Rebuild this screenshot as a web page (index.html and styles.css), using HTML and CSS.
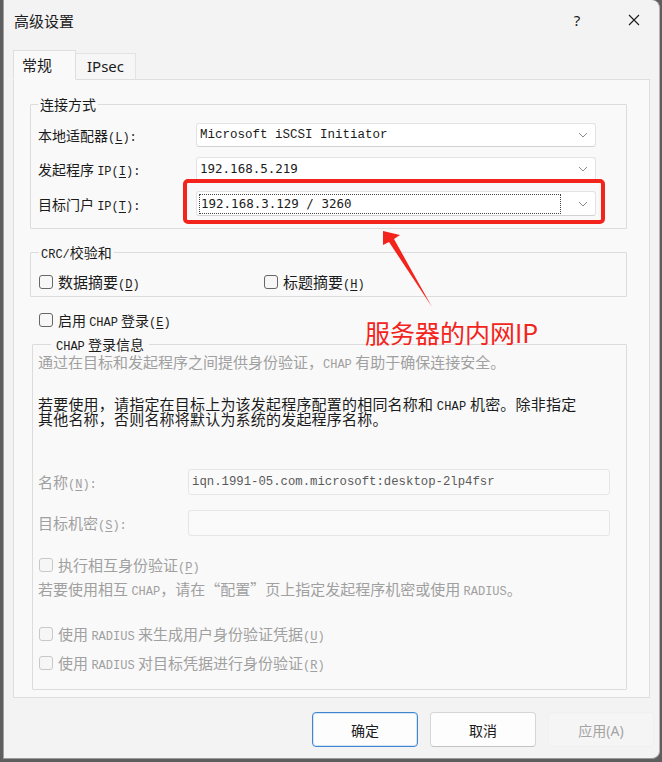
FILE: index.html
```html
<!DOCTYPE html>
<html lang="zh-CN">
<head>
    <meta charset="UTF-8">
    <meta name="viewport" content="width=device-width, initial-scale=1.0">
    <title>高级设置</title>
    <link rel="stylesheet" href="styles.css">
</head>
<body>
    <div class="window">
        <div class="titlebar">
            <span class="title">高级设置</span>
            <span class="help">?</span>
            <span class="close">
                <svg width="12" height="12" viewBox="0 0 12 12"><path d="M1 1L11 11M11 1L1 11" stroke="#1b1b1b" stroke-width="1.1" fill="none"/></svg>
            </span>
        </div>

        <div class="tabs">
            <div class="tab active">常规</div>
            <div class="tab">IPsec</div>
        </div>

        <div class="panel">
            <!-- 连接方式 -->
            <fieldset class="group conn">
                <legend>连接方式</legend>
                <div class="form">
                    <span class="label">本地适配器<span class="en">(<u>L</u>):</span></span>
                    <div class="combo">
                        <span class="value serif-mono">Microsoft iSCSI Initiator</span>
                        <svg class="chev" width="10" height="6" viewBox="0 0 10 6"><path d="M1 1L5 5L9 1" stroke="#8a8a8a" fill="none"/></svg>
                    </div>

                    <span class="label">发起程序 <span class="en">IP(<u>I</u>):</span></span>
                    <div class="combo">
                        <span class="value sans-mono">192.168.5.219</span>
                        <svg class="chev" width="10" height="6" viewBox="0 0 10 6"><path d="M1 1L5 5L9 1" stroke="#8a8a8a" fill="none"/></svg>
                    </div>

                    <span class="label">目标门户 <span class="en">IP(<u>T</u>):</span></span>
                    <div class="combo">
                        <span class="value sans-mono focus">192.168.3.129 / 3260</span>
                        <svg class="chev" width="10" height="6" viewBox="0 0 10 6"><path d="M1 1L5 5L9 1" stroke="#8a8a8a" fill="none"/></svg>
                    </div>
                </div>
            </fieldset>

            <!-- CRC -->
            <fieldset class="group crc">
                <legend><span class="en">CRC/</span>校验和</legend>
                <div class="checks">
                    <label class="check"><i class="box"></i><span>数据摘要<span class="en">(<u>D</u>)</span></span></label>
                    <label class="check"><i class="box"></i><span>标题摘要<span class="en">(<u>H</u>)</span></span></label>
                </div>
            </fieldset>

            <label class="check chap-on"><i class="box"></i><span>启用 <span class="en">CHAP</span> 登录<span class="en">(<u>E</u>)</span></span></label>

            <!-- CHAP 登录信息 -->
            <fieldset class="group chap">
                <legend><span class="en">CHAP</span> 登录信息</legend>
                <p class="muted desc">通过在目标和发起程序之间提供身份验证，<span class="en">CHAP</span> 有助于确保连接安全。</p>
                <p class="note">若要使用，请指定在目标上为该发起程序配置的相同名称和 <span class="en">CHAP</span> 机密。除非指定<br>其他名称，否则名称将默认为系统的发起程序名称。</p>

                <div class="form chap-form">
                    <span class="label muted">名称<span class="en">(<u>N</u>):</span></span>
                    <div class="field"><span class="serif-mono">iqn.1991-05.com.microsoft:desktop-2lp4fsr</span></div>

                    <span class="label muted">目标机密<span class="en">(<u>S</u>):</span></span>
                    <div class="field"></div>
                </div>

                <label class="check off mutual"><i class="box"></i><span>执行相互身份验证<span class="en">(<u>P</u>)</span></span></label>
                <p class="muted hint">若要使用相互 <span class="en">CHAP</span>，请在“配置”页上指定发起程序机密或使用 <span class="en">RADIUS</span>。</p>

                <label class="check off radius"><i class="box"></i><span>使用 <span class="en">RADIUS</span> 来生成用户身份验证凭据<span class="en">(<u>U</u>)</span></span></label>
                <label class="check off radius2"><i class="box"></i><span>使用 <span class="en">RADIUS</span> 对目标凭据进行身份验证<span class="en">(<u>R</u>)</span></span></label>
            </fieldset>
        </div>

        <div class="buttons">
            <button class="btn primary">确定</button>
            <button class="btn">取消</button>
            <button class="btn disabled">应用(<u>A</u>)</button>
        </div>
    </div>

    <!-- 标注 -->
    <div class="mark-box"></div>
    <svg class="mark-arrow" width="60" height="90" viewBox="0 0 60 90">
        <polygon points="3,5 20,9 14,13 52,81 9,16 3,19" fill="#f3241c"/>
    </svg>
    <div class="mark-text">服务器的内网IP</div>
</body>
</html>
```

FILE: styles.css
```css
html, body{
    margin: 0;
    padding: 0;
}
body{
    position: relative;
    width: 662px;
    height: 762px;
    overflow: hidden;
    background: #5e5e5e;
    font-family: "Noto Sans CJK SC", sans-serif;
    font-size: 14px;
    color: #1b1b1b;
}
u{
    text-decoration: underline;
    text-underline-offset: 2px;
}
.en{
    font-family: "Liberation Mono", monospace;
    font-size: 12px;
    line-height: 0;
}

/* 窗口 */
.window{
    margin-left: 3px;
    width: 657px;
    height: 759px;
    box-sizing: border-box;
    background: #f3f3f3;
    border-left: 1px solid #a0a0a0;
    border-right: 1px solid #b4b4b4;
    border-bottom: 1px solid #9a9a9a;
    border-radius: 0 8px 8px 0;
}
.titlebar{
    display: flex;
    align-items: center;
    height: 40px;
    padding-left: 10px;
    padding-right: 2px;
}
.title{
    font-size: 15px;
    flex: 1;
}
.help, .close{
    width: 46px;
    text-align: center;
}
.help{
    font-family: "Noto Sans", sans-serif;
    font-size: 15px;
    margin-right: 11px;
}
.close svg{
    display: block;
    margin: 0 auto;
}

/* 选项卡 */
.tabs{
    display: flex;
    align-items: flex-end;
    margin-top: 10px;
    padding-left: 9px;
    height: 30px;
    position: relative;
    z-index: 1;
    margin-bottom: -1px;
}
.tab{
    box-sizing: border-box;
    height: 27px;
    padding: 0 11px;
    border: 1px solid #e3e3e3;
    border-left: none;
    border-bottom: 1px solid #dedede;
    background: #f6f6f6;
    font-family: "Noto Sans", "Noto Sans CJK SC", sans-serif;
    font-size: 15px;
    line-height: 25px;
}
.tab.active{
    height: 30px;
    width: 63px;
    padding: 0 8px;
    border-left: 1px solid #dedede;
    border-color: #dedede;
    border-bottom-color: #f9f9f9;
    background: #f9f9f9;
    line-height: 28px;
}

.panel{
    margin-left: 9px;
    width: 637px;
    box-sizing: border-box;
    border: 1px solid #dedede;
    background: #f9f9f9;
    padding: 16px 22px 7px 16px;
}

/* 分组框 */
.group{
    margin: 0;
    min-width: 0;
    border: 1px solid #dcdcdc;
    border-radius: 1px;
}
.group legend{
    padding: 0 2px;
    line-height: 16px;
    font-size: 14px;
}
.conn{
    padding: 11px 29px 12px 7px;
}
.form{
    display: grid;
    grid-template-columns: 158px 400px;
    row-gap: 10px;
    align-items: center;
}
.label{
    line-height: 16px;
}
.combo{
    display: flex;
    align-items: center;
    height: 24px;
    box-sizing: border-box;
    background: #fff;
    border: 1px solid #e3e3e3;
    border-bottom-color: #d2d2d2;
    border-radius: 3px;
    padding: 0 7px 0 3px;
}
.combo:last-child{
    height: 25px;
}
.value{
    flex: 1;
    line-height: 18px;
}
.serif-mono{
    font-family: "Liberation Mono", monospace;
    font-size: 12.5px;
}
.sans-mono{
    font-family: "DejaVu Sans Mono", monospace;
    font-size: 12.5px;
}
.focus{
    border: 1px dotted #444;
    margin-right: 9px;
    margin-left: -1px;
    padding-left: 1px;
}
.chev{
    display: block;
    margin-left: 8px;
}

/* 复选框 */
.check{
    display: flex;
    align-items: center;
    height: 16px;
    line-height: 16px;
    font-size: 15px;
}
.box{
    flex: none;
    width: 14px;
    height: 14px;
    box-sizing: border-box;
    border: 1px solid #666;
    border-radius: 3px;
    background: #f7f7f7;
    margin-right: 5px;
}
.check.off{
    color: #a0a0a0;
}
.check.off .box{
    border-color: #c8c8c8;
    background: #f6f6f6;
}

.crc{
    margin-top: 15px;
    padding: 14px 10px 6px 8px;
}
.checks{
    display: grid;
    grid-template-columns: 225px 1fr;
}

.chap-on{
    margin: 15px 0 0 9px;
    font-size: 14px;
}

.chap{
    margin: 8px 0 0 2px;
    padding: 3px 16px 18px 5px;
}
.chap legend{
    margin-left: 13px;
    padding: 0 5px;
}
.chap p{
    margin: 0;
}
.muted{
    color: #a0a0a0;
}
p.muted{
    font-size: 15px;
    line-height: 16px;
}
p.desc{
    line-height: 14px;
}
.note{
    margin-top: 27px !important;
    font-size: 15px;
    line-height: 15px;
    letter-spacing: 0.2px;
}
.chap-form{
    margin-top: 43px;
    grid-template-columns: 150px 422px;
    row-gap: 15px;
}
.chap-form .label{
    font-size: 15px;
}
.field{
    display: flex;
    align-items: center;
    height: 26px;
    box-sizing: border-box;
    border: 1px solid #e6e6e6;
    border-radius: 3px;
    background: #fafafa;
    padding-left: 3px;
    color: #5a5a5a;
}
.field .serif-mono{
    font-size: 12.3px;
}
.mutual{
    margin-top: 21px;
    padding-left: 1px;
}
.hint{
    margin-top: 8px !important;
}
.radius{
    margin-top: 29px;
    padding-left: 1px;
}
.radius2{
    margin-top: 13px;
    padding-left: 1px;
}

/* 按钮 */
.buttons{
    display: flex;
    justify-content: flex-end;
    gap: 12px;
    margin-top: 14px;
    padding-right: 5px;
}
.btn{
    width: 106px;
    height: 35px;
    box-sizing: border-box;
    border: 1px solid #d6d6d6;
    border-bottom-color: #c2c2c2;
    border-radius: 4px;
    background: #fdfdfd;
    font-family: "Noto Sans", "Noto Sans CJK SC", sans-serif;
    font-size: 14px;
    color: #1b1b1b;
    padding: 0;
}
.btn u{
    text-decoration: none;
}
.btn.primary{
    border-color: #3f86d1;
    box-shadow: inset 0 0 0 1px #d6e5f5;
}
.btn.disabled{
    background: #f5f5f5;
    border-color: #f0f0f0;
    color: #a4a4a4;
}

/* 标注 */
.mark-box{
    position: absolute;
    left: 183px;
    top: 179px;
    width: 422px;
    height: 45px;
    box-sizing: border-box;
    border: 4px solid #f3241c;
    border-radius: 5px;
}
.mark-arrow{
    position: absolute;
    left: 380px;
    top: 226px;
}
.mark-text{
    position: absolute;
    left: 365px;
    top: 318px;
    font-size: 25px;
    line-height: 28px;
    color: #f3241c;
}
```
